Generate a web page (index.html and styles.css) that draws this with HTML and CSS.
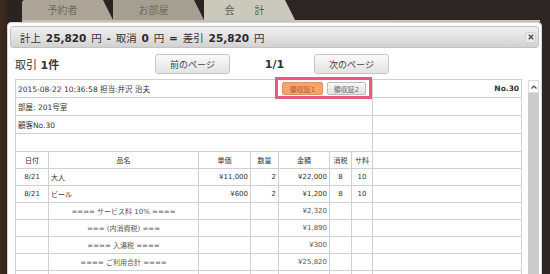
FILE: index.html
```html
<!DOCTYPE html>
<html lang="ja">
<head>
  <meta charset="UTF-8">
  <title>会計 – 取引一覧</title>
  <meta name="viewport" content="width=device-width, initial-scale=1.0">
  <link rel="stylesheet" href="styles.css">
</head>
<body>
  <div class="tabs">
    <div class="tab">予約者</div>
    <div class="tab">お部屋</div>
    <div class="tab active">会　　計</div>
  </div>
  <div class="tabline"></div>

  <div class="dialog">
    <div class="dialog-head">
      <div class="summary">計上 <b>25,820</b> 円 <b>-</b> 取消 <b>0</b> 円 <b>=</b> 差引 <b>25,820</b> 円</div>
      <button class="close" title="閉じる">
        <svg width="6" height="6" viewBox="0 0 6 6"><path d="M0.8 0.8 L5.2 5.2 M5.2 0.8 L0.8 5.2" stroke="#555" stroke-width="1.6"/></svg>
      </button>
    </div>

    <div class="toolbar">
      <div class="count">取引 <b>1件</b></div>
      <button class="page-btn">前のページ</button>
      <span class="pager">1/1</span>
      <button class="page-btn">次のページ</button>
    </div>

    <div class="receipt-area">
      <table class="receipt">
        <colgroup>
          <col style="width:33px"><col style="width:150px"><col style="width:52px"><col style="width:28px">
          <col style="width:51px"><col style="width:22px"><col style="width:21px"><col style="width:149px">
        </colgroup>
        <tr class="info">
          <td colspan="7" class="first">
            <div class="info-first">
              <span>2015-08-22 10:36:58 担当:井沢 治夫</span>
              <span class="slips">
                <button class="slip on">領収証1</button>
                <button class="slip">領収証2</button>
              </span>
            </div>
          </td>
          <td class="no">No.30</td>
        </tr>
        <tr class="info"><td colspan="7">部屋: 201号室</td><td></td></tr>
        <tr class="info"><td colspan="7">顧客No.30</td><td></td></tr>
        <tr class="info"><td colspan="7"></td><td></td></tr>

        <tr class="head">
          <td>日付</td><td>品名</td><td>単価</td><td>数量</td><td>金額</td><td>消税</td><td>サ料</td><td></td>
        </tr>
        <tr>
          <td class="c">8/21</td><td>大人</td><td class="r">¥11,000</td><td class="r">2</td>
          <td class="r">¥22,000</td><td class="c">8</td><td class="c">10</td><td></td>
        </tr>
        <tr>
          <td class="c">8/21</td><td>ビール</td><td class="r">¥600</td><td class="r">2</td>
          <td class="r">¥1,200</td><td class="c">8</td><td class="c">10</td><td></td>
        </tr>
        <tr class="sum">
          <td></td><td class="c">==== サービス料 10% ====</td><td></td><td></td>
          <td class="r">¥2,320</td><td></td><td></td><td></td>
        </tr>
        <tr class="sum">
          <td></td><td class="c">=== (内消費税) ===</td><td></td><td></td>
          <td class="r">¥1,890</td><td></td><td></td><td></td>
        </tr>
        <tr class="sum">
          <td></td><td class="c">==== 入湯税 ====</td><td></td><td></td>
          <td class="r">¥300</td><td></td><td></td><td></td>
        </tr>
        <tr class="sum">
          <td></td><td class="c">==== ご利用合計 ====</td><td></td><td></td>
          <td class="r">¥25,820</td><td></td><td></td><td></td>
        </tr>
        <tr class="sum">
          <td></td><td></td><td></td><td></td><td></td><td></td><td></td><td></td>
        </tr>
      </table>

      <div class="scrollbar">
        <div class="sb-up">
          <svg width="6" height="4" viewBox="0 0 6 4"><path d="M0.5 3.5 L3 1 L5.5 3.5" fill="none" stroke="#444" stroke-width="1.2"/></svg>
        </div>
        <div class="sb-track"></div>
      </div>
    </div>
  </div>
</body>
</html>
```

FILE: styles.css
```css
body { margin: 0; height: 274px; overflow: hidden; font-family: "DejaVu Sans", "Noto Sans CJK JP", sans-serif; color: #333; background: linear-gradient(90deg, #3e2b1f 0, #34251c 7px, #2a2421 7px, #2d2624 100%); }
button { font-family: "DejaVu Sans", "Noto Sans CJK JP", sans-serif; cursor: pointer; }

.tabs { display: flex; height: 20px; padding-left: 22px; }
.tab { width: 91px; height: 20px; line-height: 21px; padding-right: 10px; box-sizing: border-box; text-align: center; font-size: 10px; color: #6f6a61; background: #aca597; clip-path: polygon(0 0, 81px 0, 100% 100%, 0 100%); }
.tab:first-child { border-top-left-radius: 3px; }
.tab + .tab { background: #a59f92; }
.tab.active { background: #cbc9bb; color: #595853; }
.tabline { height: 2px; margin: 0 10px 0 22px; background: #c4c2b3; }

.dialog { width: 529px; height: 260px; margin-left: 7px; padding: 3px 2px 0; background: #fff; border: 1px solid #d4d4d4; border-radius: 4px; }
.dialog-head { display: flex; align-items: center; justify-content: space-between; height: 20px; padding: 0 2px 0 9px; border: 1px solid #c2c2c2; border-radius: 3px; background: linear-gradient(#f1f1f1, #d2d2d2); }
.summary { font-size: 10.5px; word-spacing: 1.5px; color: #333; white-space: nowrap; }
.summary b { color: #2a2a2a; }
.close { display: flex; align-items: center; justify-content: center; width: 11px; height: 11px; padding: 0; border: 1px solid #d2d2d2; border-radius: 2px; background: #ececec; }

.toolbar { display: flex; align-items: center; height: 20px; margin-top: 6px; padding-left: 5px; }
.count { width: 140px; font-size: 11px; }
.page-btn { width: 75px; height: 20px; padding: 0; font-size: 9px; color: #444; background: linear-gradient(#fafafa, #e3e3e3); border: 1px solid #c6c6c6; border-radius: 3px; }
.pager { width: 84px; padding-left: 5px; box-sizing: border-box; text-align: center; font-size: 11px; font-weight: bold; }

.receipt-area { display: flex; align-items: flex-start; margin-top: 5px; padding-left: 5px; }
.receipt { width: 506px; table-layout: fixed; border-collapse: collapse; font-size: 7px; color: #333; }
.receipt td { height: 16px; padding: 0 2px; border: 1px solid #d0d0d0; white-space: nowrap; overflow: hidden; }
.receipt tr.info td { height: 17px; font-size: 7.5px; }
.receipt td.first { overflow: visible; padding-right: 6px; }
.info-first { display: flex; align-items: center; justify-content: space-between; }
.slips { position: relative; display: flex; gap: 4px; }
.slips::after { content: ""; position: absolute; left: -7px; right: -6px; top: -5px; bottom: -4px; border: 3px solid #ea5a7e; }
.slip { width: 39px; height: 13px; padding: 0; font-size: 7px; color: #666; background: linear-gradient(#f7f7f7, #e3e3e3); border: 1px solid #bdbdbd; border-radius: 2px; }
.slip.on { width: 41px; color: #b5552c; background: #f6a46c; border-color: #e39160; }
.receipt td.no { text-align: right; font-weight: bold; font-size: 7.5px; }
.receipt tr.head td { text-align: center; }
.receipt td.c { text-align: center; }
.receipt td.r { text-align: right; }
.receipt tr.sum td { color: #555; }

.scrollbar { width: 12px; margin-left: 6px; margin-top: 1px; }
.sb-up { display: flex; align-items: center; justify-content: center; height: 12px; background: #fff; border: 1px solid #dcdcdc; box-sizing: border-box; height: 13px; }
.sb-track { height: 190px; background: #cbcbcb; }
```
